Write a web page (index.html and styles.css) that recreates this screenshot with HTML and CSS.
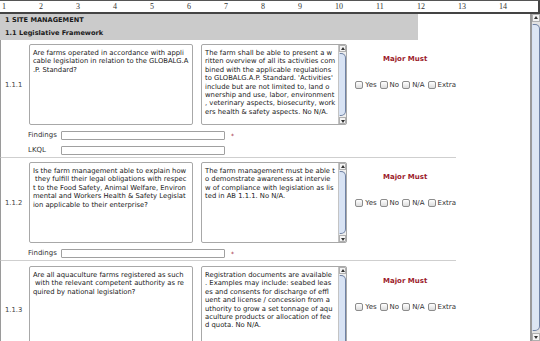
FILE: index.html
```html
<!doctype html>
<html lang="en">
  <head>
    <meta charset="UTF-8" />
    <title>audit checklist</title>
    <link rel="stylesheet" href="styles.css">
  </head>
  <body>
    <div class="ruler">
      <span>1</span><span>2</span><span>3</span><span>4</span><span>5</span>
      <span>6</span><span>7</span><span>8</span><span>9</span><span>10</span>
      <span>11</span><span>12</span><span>13</span><span>14</span>
    </div>
    <div class="page">
      <div class="main">
        <div class="section">
          <p>1 SITE MANAGEMENT</p>
          <p>1.1 Legislative Framework</p>
        </div>

        <div class="item">
          <div class="top">
            <div class="num">1.1.1</div>
            <div class="box q">Are farms operated in accordance with appli<br>cable legislation in relation to the GLOBALG.A<br>.P. Standard?</div>
            <div class="box g">
              <div class="txt">The farm shall be able to present a w<br>ritten overview of all its activities com<br>bined with the applicable regulations<br>to GLOBALG.A.P. Standard. 'Activities'<br>include but are not limited to, land o<br>wnership and use, labor, environment<br>, veterinary aspects, biosecurity, work<br>ers health &amp; safety aspects. No N/A.</div>
              <div class="sb"><span class="up"></span><span class="thumb"></span><span class="down"></span></div>
            </div>
            <div class="check">
              <p class="major">Major Must</p>
              <div class="opts">
                <span class="cb"></span><span>Yes</span>
                <span class="cb"></span><span>No</span>
                <span class="cb"></span><span>N/A</span>
                <span class="cb"></span><span>Extra</span>
              </div>
            </div>
          </div>
          <div class="field"><label>Findings</label><span class="input"></span><span class="req">*</span></div>
          <div class="field"><label>LKQL</label><span class="input"></span></div>
        </div>

        <div class="item">
          <div class="top">
            <div class="num">1.1.2</div>
            <div class="box q">Is the farm management able to explain how<br>&nbsp;they fulfill their legal obligations with respec<br>t to the Food Safety, Animal Welfare, Environ<br>mental and Workers Health &amp; Safety Legislat<br>ion applicable to their enterprise?</div>
            <div class="box g">
              <div class="txt">The farm management must be able t<br>o demonstrate awareness at intervie<br>w of compliance with legislation as lis<br>ted in AB 1.1.1. No N/A.</div>
              <div class="sb"><span class="up"></span><span class="thumb"></span><span class="down"></span></div>
            </div>
            <div class="check">
              <p class="major">Major Must</p>
              <div class="opts">
                <span class="cb"></span><span>Yes</span>
                <span class="cb"></span><span>No</span>
                <span class="cb"></span><span>N/A</span>
                <span class="cb"></span><span>Extra</span>
              </div>
            </div>
          </div>
          <div class="field"><label>Findings</label><span class="input"></span><span class="req">*</span></div>
        </div>

        <div class="item last">
          <div class="top">
            <div class="num">1.1.3</div>
            <div class="box q">Are all aquaculture farms registered as such<br>&nbsp;with the relevant competent authority as re<br>quired by national legislation?</div>
            <div class="box g">
              <div class="txt">Registration documents are available<br>. Examples may include: seabed leas<br>es and consents for discharge of effl<br>uent and license / concession from a<br>uthority to grow a set tonnage of aqu<br>aculture products or allocation of fee<br>d quota. No N/A.</div>
              <div class="sb"><span class="up"></span><span class="thumb"></span><span class="down"></span></div>
            </div>
            <div class="check">
              <p class="major">Major Must</p>
              <div class="opts">
                <span class="cb"></span><span>Yes</span>
                <span class="cb"></span><span>No</span>
                <span class="cb"></span><span>N/A</span>
                <span class="cb"></span><span>Extra</span>
              </div>
            </div>
          </div>
        </div>
      </div>
      <div class="vscroll"><span class="up"></span><span class="thumb"></span><span class="down"></span></div>
    </div>
  </body>
</html>
```
FILE: styles.css
```css
* {
  box-sizing: border-box;
}
body {
  margin: 0;
  width: 540px;
  height: 341px;
  overflow: hidden;
  font-family: "DejaVu Sans", sans-serif;
  font-size: 6.8px;
  color: #222222;
  background: #ffffff;
}
p {
  margin: 0;
}
.ruler {
  display: flex;
  height: 14px;
  border-top: 1px solid #555555;
  border-bottom: 2px solid #444444;
  border-right: 2px solid #444444;
  font-family: "Liberation Serif", serif;
  font-size: 8px;
  line-height: 11px;
  color: #333333;
  padding-left: 2px;
}
.ruler span {
  width: 37px;
  flex: none;
}
.ruler span:nth-child(n + 10) {
  width: 41px;
}
.page {
  display: flex;
  height: 327px;
}
.main {
  width: 530px;
  overflow: hidden;
}
.section {
  width: 418px;
  height: 26px;
  padding: 0 5px;
  background: #cbcbcb;
  font-weight: bold;
  font-size: 6.6px;
  line-height: 13px;
  color: #1a1a1a;
}
.item {
  width: 456px;
  padding: 4px 0 2px 0;
  border-left: 1px solid #9a9a9a;
  border-bottom: 1px solid #cfcfcf;
}
.item.last {
  border-bottom: 0;
  padding-top: 5px;
}
.top {
  display: flex;
  align-items: center;
}
.num {
  width: 28px;
  padding-left: 4px;
  color: #444444;
}
.box {
  height: 81px;
  border: 1px solid #a8a8a8;
  border-radius: 2px;
  background: #ffffff;
  line-height: 8.4px;
  color: #202020;
  white-space: nowrap;
  overflow: hidden;
}
.item.last .box {
  height: 88px;
}
.q {
  width: 165px;
  padding: 4px 3px;
}
.g {
  width: 147px;
  margin-left: 8px;
  display: flex;
}
.g .txt {
  flex: 1;
  padding: 4px 3px;
  overflow: hidden;
}
.sb,
.vscroll {
  display: flex;
  flex-direction: column;
  width: 8px;
  background: #eeeeee;
  border-left: 1px solid #c4c4c4;
}
.sb .up,
.sb .down,
.vscroll .up,
.vscroll .down {
  height: 7px;
  flex: none;
  position: relative;
  background: #f4f4f4;
  border: 1px solid #b0b0b0;
}
.sb .up::after,
.vscroll .up::after {
  content: "";
  position: absolute;
  left: 1px;
  top: 1px;
  border: 2px solid transparent;
  border-bottom: 3px solid #333333;
  border-top: 0;
}
.sb .down::after,
.vscroll .down::after {
  content: "";
  position: absolute;
  left: 1px;
  top: 2px;
  border: 2px solid transparent;
  border-top: 3px solid #333333;
  border-bottom: 0;
}
.sb .thumb,
.vscroll .thumb {
  flex: 1;
  margin: 1px 0;
  background: #d8e3f4;
  border: 1px solid #6f82a4;
  border-left-color: #d8e3f4;
  border-radius: 0 5px 5px 0;
}
.check {
  flex: 1;
  align-self: flex-start;
  padding: 11px 0 0 7px;
}
.major {
  text-align: center;
  font-weight: bold;
  font-size: 7px;
  color: #9c1b2b;
  line-height: 8px;
  margin-bottom: 18px;
}
.opts {
  display: flex;
  align-items: center;
  gap: 2px;
  font-size: 7px;
  color: #333333;
  line-height: 8px;
}
.cb {
  width: 8px;
  height: 8px;
  margin-left: 1px;
  border: 1px solid #8c8c8c;
  border-radius: 2px;
  background: linear-gradient(#ffffff, #dcdcdc);
}
.field {
  display: flex;
  align-items: center;
  margin-top: 6px;
  padding-left: 27px;
  line-height: 9px;
  font-size: 7px;
}
.field label {
  width: 33px;
  color: #333333;
}
.input {
  width: 164px;
  height: 9px;
  border: 1px solid #a0a0a0;
  border-radius: 1px;
  background: #ffffff;
}
.req {
  margin-left: 6px;
  color: #9c1b2b;
  font-size: 6px;
}
.vscroll {
  width: 10px;
  height: 327px;
  border-left: 2px solid #9a9a9a;
  background: #e2e2e2;
}
.vscroll .up,
.vscroll .down {
  height: 8px;
}
.vscroll .thumb {
  margin: 2px 0;
  background: #dde6f3;
}
```
